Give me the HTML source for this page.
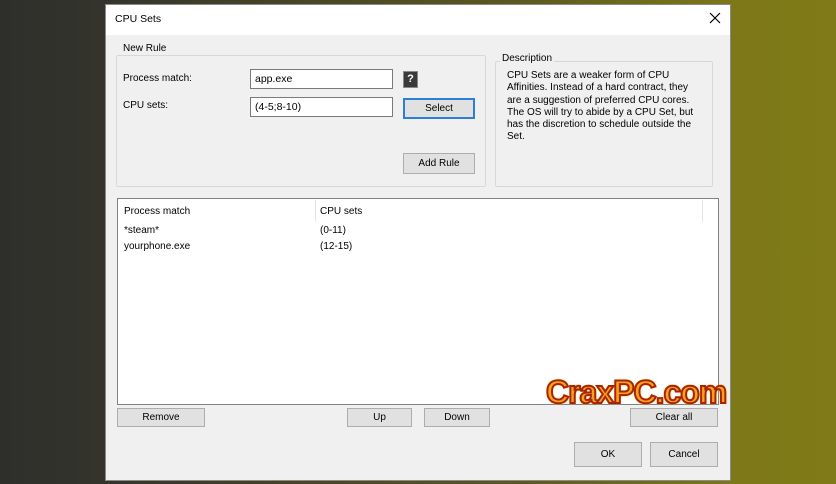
<!DOCTYPE html><html><head><style>
*{margin:0;padding:0;box-sizing:border-box}
body{width:836px;height:484px;overflow:hidden;background:linear-gradient(90deg,#2e2e2c 0%,#34342c 12%,#5a5720 60%,#7d7818 88%,#807b18 100%);font-family:"Liberation Sans",sans-serif;font-size:10px;color:#000;position:relative}
.a{position:absolute}
.dlg{left:105px;top:4px;width:626px;height:477px;background:#f0f0f0;border:1px solid #8a8a8a}
.tb{left:106px;top:5px;width:624px;height:30px;background:#fff}
.grp{border:1px solid #d8d8d8;border-radius:2px}
.lg{background:#f0f0f0;padding:0 2px}
.inp{background:#fff;border:1px solid #7a7a7a;padding:0 4px;line-height:18px;font-size:10.5px}
.btn{background:#e1e1e1;border:1px solid #adadad;text-align:center;font-size:10px}
</style></head><body>
<div class="a dlg"></div>
<div class="a tb"></div>
<div class="a" style="left:115px;top:13px;font-size:10.5px">CPU Sets</div>
<svg class="a" style="left:709px;top:12px" width="12" height="12"><path d="M1 1L11 11M11 1L1 11" stroke="#000" stroke-width="1.2"/></svg>
<div class="a grp" style="left:116px;top:55px;width:370px;height:132px"></div>
<div class="a lg" style="left:121px;top:43px">New Rule</div>
<div class="a grp" style="left:495px;top:61px;width:218px;height:126px"></div>
<div class="a lg" style="left:500px;top:53px">Description</div>
<div class="a" style="left:507px;top:70px;width:194px;line-height:12.3px;font-size:10px">CPU Sets are a weaker form of CPU Affinities. Instead of a hard contract, they are a suggestion of preferred CPU cores. The OS will try to abide by a CPU Set, but has the discretion to schedule outside the Set.</div>
<div class="a" style="left:123px;top:73px">Process match:</div>
<div class="a" style="left:123px;top:100px">CPU sets:</div>
<div class="a inp" style="left:250px;top:69px;width:143px;height:20px">app.exe</div>
<div class="a inp" style="left:250px;top:97px;width:143px;height:20px">(4-5;8-10)</div>
<div class="a" style="left:403px;top:71px;width:15px;height:17px;background:#3a3a3a;border:1px solid #888;color:#fff;font-weight:bold;text-align:center;line-height:15px;font-size:11px">?</div>
<div class="a btn" style="left:403px;top:98px;width:72px;height:21px;border:2px solid #2d7fd6;line-height:18px">Select</div>
<div class="a btn" style="left:403px;top:153px;width:72px;height:21px;line-height:20px">Add Rule</div>
<div class="a" style="left:117px;top:198px;width:602px;height:207px;background:#fff;border:1px solid #828282"></div>
<div class="a" style="left:315px;top:200px;width:1px;height:22px;background:#e5e5e5"></div>
<div class="a" style="left:702px;top:200px;width:1px;height:22px;background:#e5e5e5"></div>
<div class="a" style="left:124px;top:206px">Process match</div>
<div class="a" style="left:320px;top:206px">CPU sets</div>
<div class="a" style="left:124px;top:225px">*steam*</div>
<div class="a" style="left:320px;top:225px">(0-11)</div>
<div class="a" style="left:124px;top:241px">yourphone.exe</div>
<div class="a" style="left:320px;top:241px">(12-15)</div>
<div class="a btn" style="left:117px;top:408px;width:88px;height:19px;line-height:18px">Remove</div>
<div class="a btn" style="left:347px;top:408px;width:65px;height:19px;line-height:18px">Up</div>
<div class="a btn" style="left:424px;top:408px;width:66px;height:19px;line-height:18px">Down</div>
<div class="a btn" style="left:630px;top:408px;width:88px;height:19px;line-height:18px">Clear all</div>
<div class="a btn" style="left:574px;top:442px;width:68px;height:25px;line-height:24px">OK</div>
<div class="a btn" style="left:650px;top:442px;width:68px;height:25px;line-height:24px">Cancel</div>
<div class="a" style="left:546px;top:374px;font-family:'Liberation Sans',sans-serif;font-weight:bold;font-size:32px;color:#f7a21c;-webkit-text-stroke:2px #a82408;letter-spacing:-1px;text-shadow:0 0 3px #ffd34a">CraxPC.com</div>
</body></html>
